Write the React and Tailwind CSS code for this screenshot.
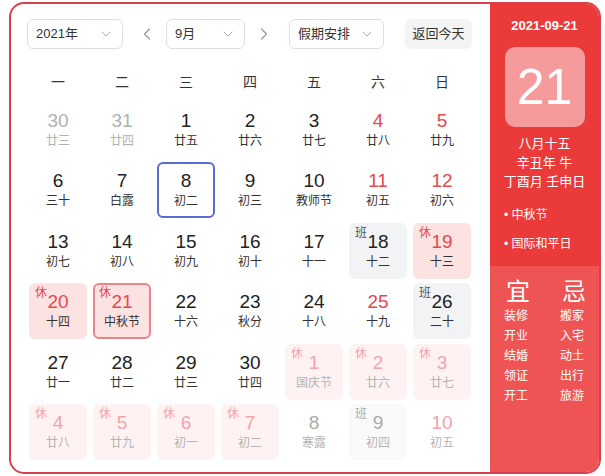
import { ChevronDown, ChevronLeft, ChevronRight } from "lucide-react";

const weekdays = ["一", "二", "三", "四", "五", "六", "日"];

// prev = last month, next = next month (faded)
const days = [
  { d: 30, l: "廿三", prev: true },
  { d: 31, l: "廿四", prev: true },
  { d: 1, l: "廿五" },
  { d: 2, l: "廿六" },
  { d: 3, l: "廿七" },
  { d: 4, l: "廿八", red: true },
  { d: 5, l: "廿九", red: true },
  { d: 6, l: "三十" },
  { d: 7, l: "白露" },
  { d: 8, l: "初二", picked: true },
  { d: 9, l: "初三" },
  { d: 10, l: "教师节" },
  { d: 11, l: "初五", red: true },
  { d: 12, l: "初六", red: true },
  { d: 13, l: "初七" },
  { d: 14, l: "初八" },
  { d: 15, l: "初九" },
  { d: 16, l: "初十" },
  { d: 17, l: "十一" },
  { d: 18, l: "十二", tag: "班" },
  { d: 19, l: "十三", tag: "休", red: true },
  { d: 20, l: "十四", tag: "休", red: true },
  { d: 21, l: "中秋节", tag: "休", red: true, today: true },
  { d: 22, l: "十六" },
  { d: 23, l: "秋分" },
  { d: 24, l: "十八" },
  { d: 25, l: "十九", red: true },
  { d: 26, l: "二十", tag: "班" },
  { d: 27, l: "廿一" },
  { d: 28, l: "廿二" },
  { d: 29, l: "廿三" },
  { d: 30, l: "廿四" },
  { d: 1, l: "国庆节", tag: "休", next: true },
  { d: 2, l: "廿六", tag: "休", next: true },
  { d: 3, l: "廿七", tag: "休", next: true },
  { d: 4, l: "廿八", tag: "休", next: true },
  { d: 5, l: "廿九", tag: "休", next: true },
  { d: 6, l: "初一", tag: "休", next: true },
  { d: 7, l: "初二", tag: "休", next: true },
  { d: 8, l: "寒露", next: true },
  { d: 9, l: "初四", tag: "班", next: true },
  { d: 10, l: "初五", next: true, red: true },
];

function Select({ label, w }) {
  return (
    <div className={`${w} h-[30px] flex items-center justify-between pl-[8px] pr-[8px] border border-[#dcdfe6] rounded-[6px] bg-white text-[13px] text-[#333]`}>
      <span>{label}</span>
      <ChevronDown size={16} strokeWidth={1.5} className="text-[#a8abb2]" />
    </div>
  );
}

function Cell({ day }) {
  let box = "bg-white";
  let num = "text-[#222]";
  let lunar = "text-[#333]";
  let tag = "text-[#e5484d]";
  if (day.prev) {
    num = "text-[#b0b0b0]";
    lunar = "text-[#b0b0b0]";
  }
  if (day.red) num = "text-[#e5484d]";
  if (day.tag === "休") box = "bg-[#fde2e2]";
  if (day.tag === "班") {
    box = "bg-[#f2f3f5]";
    tag = "text-[#555]";
  }
  if (day.next) {
    num = day.tag === "休" || day.red ? "text-[#f4a4a8]" : "text-[#aaa]";
    lunar = "text-[#b4b4b4]";
    if (day.tag === "休") {
      box = "bg-[#fef2f2]";
      tag = "text-[#f4a4a8]";
    }
    if (day.tag === "班") {
      box = "bg-[#fafafa]";
      tag = "text-[#aaa]";
    }
  }
  let border = "border-2 border-transparent";
  if (day.picked) border = "border-2 border-[#5b6bd5]";
  if (day.today) border = "border-2 border-[#e98489]";

  return (
    <div className={`relative h-[56px] rounded-[6px] ${box} ${border} flex flex-col items-center pt-[6px]`}>
      {day.tag && <span className={`absolute left-[4px] top-[1px] text-[12px] leading-[14px] ${tag}`}>{day.tag}</span>}
      <span className={`text-[19px] leading-[22px] ${num}`}>{day.d}</span>
      <span className={`text-[12px] leading-[18px] ${lunar}`}>{day.l}</span>
    </div>
  );
}

export default function App() {
  return (
    <div
      className="ml-[9px] mt-[2px] w-[592px] h-[472px] border-2 border-[#d6424b] rounded-[15px] overflow-hidden flex bg-white"
      style={{ fontFamily: '"Liberation Sans", "Noto Sans CJK SC", sans-serif' }}
    >
      <div className="w-[479px] pl-[16px] pt-[15px]">
        <div className="flex items-center">
          <Select label="2021年" w="w-[96px]" />
          <div className="w-[30px] ml-[9px] flex justify-center text-[#999]">
            <ChevronLeft size={20} strokeWidth={1.5} />
          </div>
          <div className="ml-[4px]">
            <Select label="9月" w="w-[79px]" />
          </div>
          <div className="w-[30px] ml-[4px] flex justify-center text-[#999]">
            <ChevronRight size={20} strokeWidth={1.5} />
          </div>
          <div className="ml-[10px]">
            <Select label="假期安排" w="w-[95px]" />
          </div>
          <div className="ml-[21px] w-[67px] h-[30px] rounded-[6px] bg-[#f4f4f5] flex items-center justify-center text-[13px] text-[#333]">
            返回今天
          </div>
        </div>

        <div className="grid grid-cols-[repeat(7,58px)] gap-x-[6px] mt-[23px] pl-[2px]">
          {weekdays.map((w) => (
            <div key={w} className="text-center text-[14px] text-[#333] h-[20px] leading-[20px]">
              {w}
            </div>
          ))}
        </div>

        <div className="grid grid-cols-[repeat(7,58px)] gap-x-[6px] gap-y-[4.4px] mt-[10px] pl-[2px]">
          {days.map((day, i) => (
            <Cell key={i} day={day} />
          ))}
        </div>
      </div>

      <div className="flex-1 flex flex-col text-white">
        <div className="bg-[#eb3a3a] h-[262px] flex flex-col items-center pt-[14px]">
          <div className="text-[13px] font-bold leading-[16px]">2021-09-21</div>
          <div className="mt-[13px] w-[80px] h-[80px] rounded-[10px] bg-[#f59b9b] flex items-center justify-center text-[50px] leading-none">
            21
          </div>
          <div className="mt-[7px] text-[13px] leading-[19px] text-center">
            <div>八月十五</div>
            <div>辛丑年 牛</div>
            <div>丁酉月 壬申日</div>
          </div>
          <div className="self-start pl-[14px] mt-[16px] text-[12px] leading-[16px]">
            <div>• 中秋节</div>
            <div className="mt-[13px]">• 国际和平日</div>
          </div>
        </div>
        <div className="flex-1 bg-[#ef5454] flex pt-[12px] pl-[14px]">
          <div className="w-[56px] flex flex-col">
            <div className="text-[24px] leading-[28px] pl-[2px]">宜</div>
            {["装修", "开业", "结婚", "领证", "开工"].map((t) => (
              <div key={t} className="text-[12px] leading-[20px]">{t}</div>
            ))}
          </div>
          <div className="flex flex-col">
            <div className="text-[24px] leading-[28px] pl-[2px]">忌</div>
            {["搬家", "入宅", "动土", "出行", "旅游"].map((t) => (
              <div key={t} className="text-[12px] leading-[20px]">{t}</div>
            ))}
          </div>
        </div>
      </div>
    </div>
  );
}
